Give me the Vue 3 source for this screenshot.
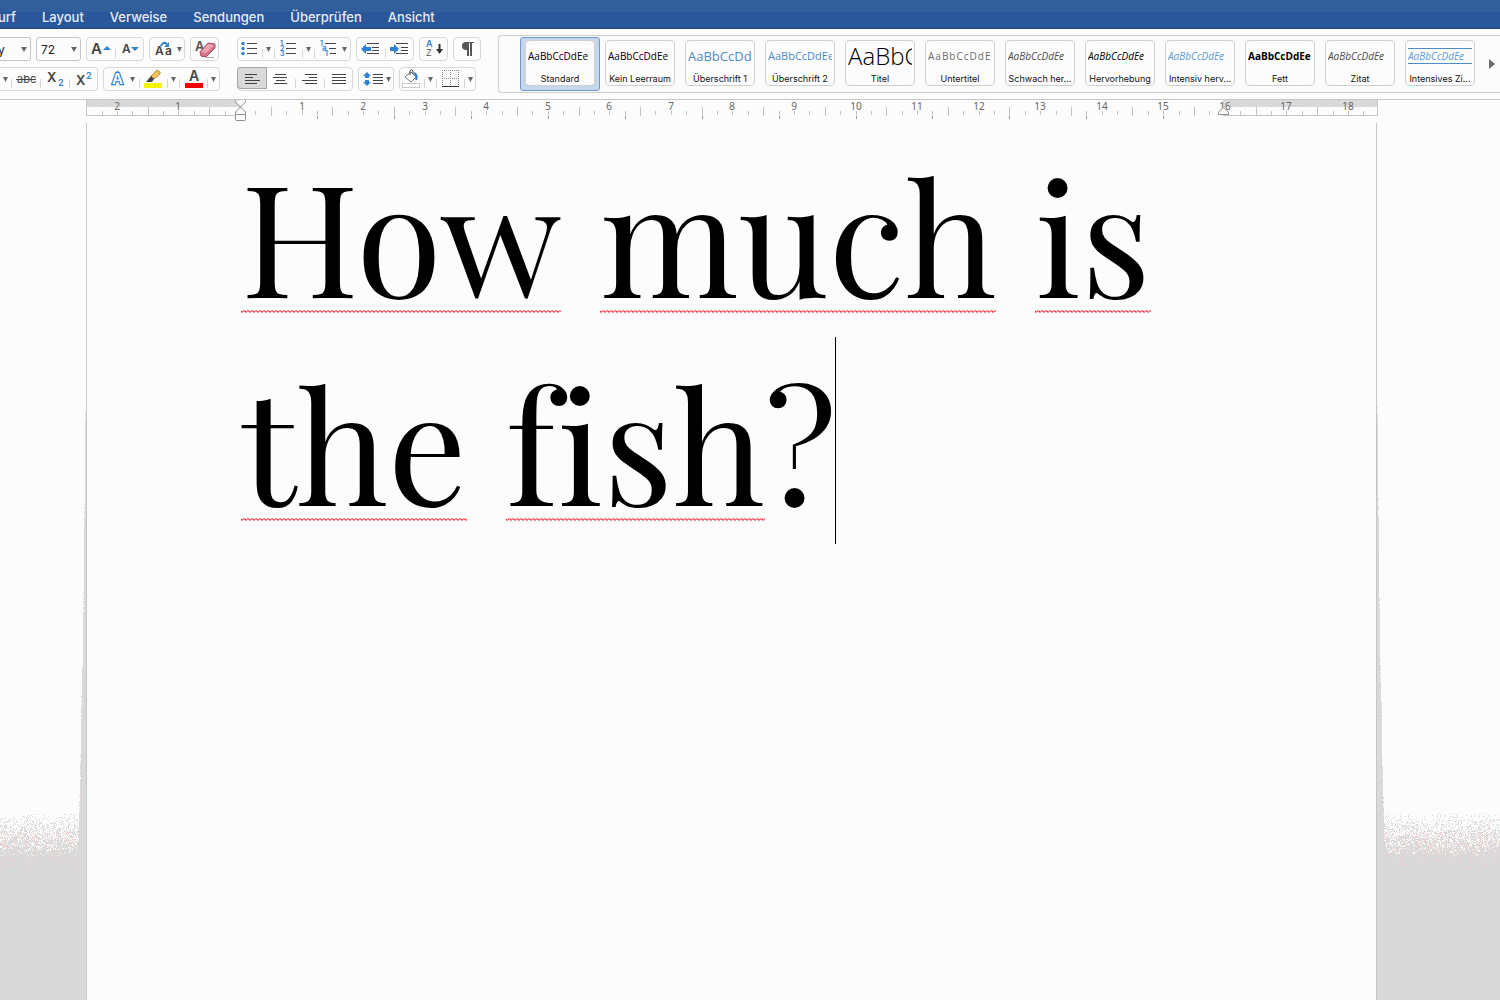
<template>
  <div class="word">
    <header class="tab-bar">
      <nav class="tabs" aria-label="Menüband">
        <a v-for="tab in tabs" :key="tab" href="#" class="tab">{{ tab }}</a>
      </nav>
    </header>

    <div class="ribbon">
      <div class="ribbon-section font-section">
        <div class="row">
          <label class="combo font-name">
            <select aria-label="Schriftart"><option>y</option></select>
          </label>
          <label class="combo font-size">
            <select aria-label="Schriftgrad"><option>72</option></select>
          </label>
          <div v-for="(group, i) in fontRow" :key="i" class="group">
            <button v-for="b in group" :key="b.label" class="tool" :aria-label="b.label">
              <svg :width="b.w" height="22" v-html="b.icon"></svg>
            </button>
          </div>
        </div>
        <div class="row">
          <div v-for="(group, i) in effectRow" :key="i" class="group" :class="{ open: i === 0 }">
            <button v-for="b in group" :key="b.label" class="tool" :aria-label="b.label">
              <svg :width="b.w" height="22" v-html="b.icon"></svg>
            </button>
          </div>
        </div>
      </div>

      <div class="ribbon-section">
        <div class="row">
          <div v-for="(group, i) in listRow" :key="i" class="group">
            <button v-for="b in group" :key="b.label" class="tool" :aria-label="b.label">
              <svg :width="b.w" height="22" v-html="b.icon"></svg>
            </button>
          </div>
        </div>
        <div class="row">
          <div v-for="(group, i) in alignRow" :key="i" class="group">
            <button
              v-for="b in group"
              :key="b.label"
              class="tool"
              :class="{ active: b.label === align }"
              :aria-label="b.label"
              @click="setAlign(b.label)"
            >
              <svg :width="b.w" height="22" v-html="b.icon"></svg>
            </button>
          </div>
        </div>
      </div>

      <div class="gallery">
        <button
          v-for="s in styles"
          :key="s.name"
          class="style-item"
          :class="{ selected: s.name === current }"
          @click="current = s.name"
        >
          <span class="card">
            <span class="sample" :class="s.kind">AaBbCcDdEe</span>
            <span class="style-name">{{ s.name }}</span>
          </span>
        </button>
        <button class="gallery-next" aria-label="Weitere Formatvorlagen">
          <svg width="6" height="10"><path d="M0 0L6 5L0 10z" fill="#6b6b6b" /></svg>
        </button>
      </div>
    </div>

    <div class="ruler">
      <svg class="ruler-scale" height="22">
        <rect x="0" y="0" width="154" height="7" fill="#d9d9d9" />
        <rect x="1137" y="0" width="155" height="7" fill="#d9d9d9" />
        <path d="M0.5 0V15.5H154M1137 15.5H1291.5V0" fill="none" stroke="#c6c6c6" />
        <rect
          v-for="t in ticks"
          :key="'t' + t.x"
          :x="t.x"
          :y="t.y"
          width="1"
          :height="t.h"
          fill="#c2c2c2"
        />
        <rect v-for="x in tabStops" :key="'s' + x" :x="x" y="16" width="1" height="3" fill="#999" />
        <text v-for="n in numbers" :key="n.x" :x="n.x" y="10" class="ruler-number">{{ n.label }}</text>
        <g fill="#fcfcfc" stroke="#8c8c8c">
          <path d="M149.500 0.500V2L154.500 7L159.500 2V0.500" />
          <path d="M149.500 14.500V12L154.500 7L159.500 12V14.500z" />
          <rect x="149.500" y="14.500" width="10" height="6" rx="1" />
          <path d="M1132.500 14.500V12.500L1137.500 7L1142.500 12.500V14.500z" />
        </g>
      </svg>
    </div>

    <main ref="workspace" class="workspace">
      <canvas ref="shade" class="shade"></canvas>
      <article class="page" contenteditable="true" spellcheck="false" role="textbox" aria-label="Dokument">
        <p class="line"><span class="word-check">How</span> <span class="word-check">much</span> <span class="word-check">is</span></p>
        <p class="line"><span class="word-check">the</span> <span class="word-check">fish</span><span class="tail">?</span></p>
      </article>
    </main>
  </div>
</template>

<script setup>
import { ref, onMounted, onUnmounted } from 'vue'

const tabs = ['urf', 'Layout', 'Verweise', 'Sendungen', 'Überprüfen', 'Ansicht']

const current = ref('Standard')
const align = ref('Linksbündig')
const alignments = ['Linksbündig', 'Zentriert', 'Rechtsbündig', 'Blocksatz']

const setAlign = (label) => {
  if (alignments.includes(label)) align.value = label
}

const styles = [
  { name: 'Standard', kind: 'normal' },
  { name: 'Kein Leerraum', kind: 'normal' },
  { name: 'Überschrift 1', kind: 'heading1' },
  { name: 'Überschrift 2', kind: 'heading2' },
  { name: 'Titel', kind: 'title' },
  { name: 'Untertitel', kind: 'subtitle' },
  { name: 'Schwach her...', kind: 'subtle' },
  { name: 'Hervorhebung', kind: 'emphasis' },
  { name: 'Intensiv herv...', kind: 'intense' },
  { name: 'Fett', kind: 'strong' },
  { name: 'Zitat', kind: 'subtle' },
  { name: 'Intensives Zi...', kind: 'quote' }
]

// icon helpers
const text = (x, y, size, str, fill = '#444', extra = '') =>
  `<text x="${x}" y="${y}" font-family="Inter, sans-serif" font-size="${size}" fill="${fill}" ${extra}>${str}</text>`
const bold = 'font-weight="600"'
const drop = (x) => `<path d="M${x} 9h5l-2.500 5z" fill="#666"/>`
const sep = '<path d="M0.500 11v9" stroke="#d6d6d6"/>'
const lines = (list) =>
  `<path d="${list.map(([x, y, w]) => `M${x} ${y}.500h${w}`).join('')}" stroke="#444" stroke-width="1"/>`
const blue = '#2f82cf'

const fontRow = [
  [
    { label: 'Schrift vergrößern', w: 28, icon: text(4, 16, 15, 'A', '#444', bold) + `<path d="M16 12h8l-4-4z" fill="${blue}"/>` },
    { label: 'Schrift verkleinern', w: 28, icon: sep + text(7, 15, 12, 'A', '#444', bold) + `<path d="M16 9h8l-4 4z" fill="${blue}"/>` }
  ],
  [
    {
      label: 'Groß-/Kleinschreibung',
      w: 34,
      icon:
        text(5, 17, 12, 'A', '#444', bold) + text(15, 17, 12, 'a', '#444', bold) +
        `<path d="M11 8q2-5 6-2" fill="none" stroke="${blue}" stroke-width="2"/><path d="M19 4v5h-5z" fill="${blue}"/>` + drop(27)
    }
  ],
  [
    {
      label: 'Formatierung löschen',
      w: 27,
      icon:
        text(4, 13, 13, 'A', '#555', bold) +
        '<path d="M15 19.500h8" stroke="#aaa"/><path d="M9 14L17 5L24 6V10L15 19L10 18z" fill="#d6788c" stroke="#a84a60"/><path d="M10 14L17 6L23 7L15 15z" fill="#e9a3b1"/>'
    }
  ]
]

const effectRow = [
  [
    { label: 'Unterstreichungsart', w: 11, icon: drop(3) },
    { label: 'Durchgestrichen', w: 29, icon: sep + text(6, 15, 11, 'abc', '#444') + '<path d="M5 11.500h20" stroke="#444"/>' },
    { label: 'Tiefgestellt', w: 29, icon: sep + text(7, 14, 13, 'X', '#444', bold) + text(18, 18, 9, '2', blue, bold) },
    { label: 'Hochgestellt', w: 28, icon: sep + text(7, 17, 13, 'X', '#444', bold) + text(17, 11, 9, '2', blue, bold) }
  ],
  [
    {
      label: 'Texteffekte',
      w: 35,
      icon: text(8, 16, 15, 'A', '#fff', `font-weight="600" stroke="${blue}" stroke-width="2.500" paint-order="stroke"`) + drop(26)
    },
    {
      label: 'Texthervorhebungsfarbe',
      w: 28,
      icon:
        sep +
        '<rect x="5" y="15" width="18" height="5" fill="#f5f500"/><path d="M12 8L18 2L21 4V6L15 11z" fill="#f4c257" stroke="#c08b2c"/><path d="M12 8L15 11L13 14H7z" fill="#444"/>'
    },
    { label: 'Hervorhebungsfarben', w: 12, icon: sep + drop(4) },
    { label: 'Schriftfarbe', w: 28, icon: sep + text(10, 13, 14, 'A', '#444', bold) + '<rect x="6" y="15" width="18" height="5" fill="#f00000"/>' },
    { label: 'Schriftfarben', w: 12, icon: sep + drop(4) }
  ]
]

const threeLines = (x, w) => lines([[x, 5, w], [x, 10, w], [x, 15, w]])

const listRow = [
  [
    {
      label: 'Aufzählung',
      w: 24,
      icon: `<g fill="${blue}"><circle cx="5" cy="5.500" r="1.700"/><circle cx="5" cy="10.500" r="1.700"/><circle cx="5" cy="15.500" r="1.700"/></g>` + threeLines(9, 10)
    },
    { label: 'Aufzählungszeichen', w: 12, icon: sep + drop(4) },
    {
      label: 'Nummerierung',
      w: 28,
      icon: sep + text(6, 8, 7, '1', blue, bold) + text(6, 13, 7, '2', blue, bold) + text(6, 18, 7, '3', blue, bold) + threeLines(12, 10)
    },
    { label: 'Nummerierungsformate', w: 12, icon: sep + drop(4) },
    {
      label: 'Liste mit mehreren Ebenen',
      w: 36,
      icon:
        sep + text(6, 8, 7, '1', blue, bold) + text(8, 13, 8, 'a', blue, bold) + text(11, 18, 7, '1', blue, bold) +
        lines([[11, 5, 11], [15, 10, 7], [16, 15, 6]]) + drop(28)
    }
  ],
  [
    {
      label: 'Einzug verkleinern',
      w: 28,
      icon: `<path d="M4 11l5-5v3h5v4H9v3z" fill="${blue}"/>` + lines([[10, 5, 12], [15, 9, 7], [15, 12, 7], [10, 15, 12]])
    },
    {
      label: 'Einzug vergrößern',
      w: 28,
      icon: sep + `<path d="M14 11l-5-5v3H5v4h4v3z" fill="${blue}"/>` + lines([[11, 5, 12], [16, 9, 7], [16, 12, 7], [11, 15, 12]])
    }
  ],
  [
    {
      label: 'Sortieren',
      w: 27,
      icon:
        text(6, 9, 9, 'A', blue, bold) + text(6, 18, 9, 'Z', '#555') +
        '<path d="M19.500 6v7" stroke="#333" stroke-width="2"/><path d="M16 11h7l-3.500 5z" fill="#333"/>'
    }
  ],
  [
    {
      label: 'Formatierungszeichen',
      w: 26,
      icon: '<path d="M15 4H12a4 4 0 0 0 0 8h3z" fill="#555"/><path d="M14 4v14M17 4v14" stroke="#555" stroke-width="2"/><path d="M11 4.500h9" stroke="#555"/>'
    }
  ]
]

const alignRow = [
  [
    { label: 'Linksbündig', w: 28, icon: lines([[7, 6, 12], [7, 9, 8], [7, 12, 15], [7, 15, 12]]) },
    { label: 'Zentriert', w: 29, icon: lines([[9, 6, 11], [7, 9, 14], [10, 12, 9], [8, 15, 13]]) },
    { label: 'Rechtsbündig', w: 29, icon: sep + lines([[10, 6, 12], [14, 9, 8], [7, 12, 15], [10, 15, 12]]) },
    { label: 'Blocksatz', w: 28, icon: sep + lines([[8, 6, 14], [8, 9, 14], [8, 12, 14], [8, 15, 14]]) }
  ],
  [
    {
      label: 'Zeilenabstand',
      w: 34,
      icon:
        `<path d="M8 4l4 4h-2v2h-4v-2h-2zM8 18l4-4h-2v-2h-4v2h-2z" fill="${blue}"/>` +
        lines([[14, 6, 10], [14, 9, 10], [14, 12, 10], [14, 15, 10]]) + drop(27)
    }
  ],
  [
    {
      label: 'Schattierung',
      w: 24,
      icon:
        '<path d="M5 9L11 4L16 9L11 14z" fill="#fff" stroke="#777"/><path d="M10 7V3q1.500-3 3 0v3" fill="none" stroke="#444"/><path d="M14 5q4 2 2 7" fill="none" stroke="#2f82cf" stroke-width="2"/><rect x="2.500" y="15.500" width="17" height="4" fill="#fff" stroke="#c9c9c9"/>'
    },
    { label: 'Schattierungsfarben', w: 12, icon: sep + drop(4) },
    {
      label: 'Rahmen',
      w: 28,
      icon: sep + '<path d="M6.500 2v16M14.500 2v16M22.500 2v16M6 2.500h17M6 10.500h17" stroke="#888" stroke-dasharray="1 1"/><path d="M6 18.500h17" stroke="#333"/>'
    },
    { label: 'Rahmenarten', w: 11, icon: sep + drop(4) }
  ]
]

// ruler: 0 cm sits where the text column starts
const CM = 61.55
const ORIGIN = 154
const ticks = []
const numbers = []
for (let q = -10; q <= 73; q++) {
  const x = Math.round(ORIGIN + (q * CM) / 4)
  if (q === 0 || q === 64 || x < 3) continue
  const half = q % 4 === 2 || q % 4 === -2
  ticks.push({ x, y: half ? 7 : 11, h: half ? 9 : 4 })
}
for (let n = -2; n <= 18; n++) {
  if (n !== 0) numbers.push({ x: Math.round(ORIGIN + n * CM), label: Math.abs(n) })
}
const tabStops = Array.from({ length: 12 }, (_, i) => Math.round(ORIGIN + (i + 1) * CM * 1.25))

// shaded surface around the page, dithered towards the top
const workspace = ref(null)
const shade = ref(null)
let observer = null

const GRAY = '#d9d9d9'
const EDGE_STEPS = [276, 374, 465, 532, 570, 628, 665, 692]
const BAND_TOP = 690
const BAND_END = 752

const drawShade = () => {
  const w = workspace.value.clientWidth
  const h = workspace.value.clientHeight
  const canvas = shade.value
  canvas.width = w
  canvas.height = h
  const ctx = canvas.getContext('2d')
  const left = 86
  const right = w - 123
  let seed = 7
  const rand = () => {
    seed = (seed * 16807) % 2147483647
    return seed / 2147483647
  }
  const dot = (x, y, color) => {
    ctx.fillStyle = color
    ctx.fillRect(x, y, 1, 1)
  }

  EDGE_STEPS.forEach((start, i) => {
    for (let y = start; y < h; y++) {
      const p = (y - start) / 28
      if (rand() < p) dot(left - 1 - i, y, p < 2 && rand() < 0.1 ? '#f3cfcf' : GRAY)
      if (rand() < p) dot(right + i, y, p < 2 && rand() < 0.1 ? '#f3cfcf' : GRAY)
    }
  })

  for (let y = BAND_TOP; y < BAND_END; y++) {
    const t = (y - BAND_TOP) / (BAND_END - BAND_TOP)
    const cover = Math.min(1, t * 1.4 + 0.03)
    const pink = t < 0.3 ? 0.04 : 0.3 * (1 - t)
    for (let x = 0; x < w; x++) {
      if (x >= left - 8 && x < right + 8) continue
      if (rand() > cover) continue
      const r = rand()
      dot(x, y, r < pink ? '#f5cdcd' : r > 0.95 && t < 0.7 ? '#e9e6cf' : r > 0.7 && t < 0.6 ? '#dadee0' : GRAY)
    }
  }
  ctx.fillStyle = GRAY
  ctx.fillRect(0, BAND_END, left, h)
  ctx.fillRect(right, BAND_END, w, h)
}

onMounted(() => {
  drawShade()
  observer = new ResizeObserver(drawShade)
  observer.observe(workspace.value)
})

onUnmounted(() => {
  observer.disconnect()
})
</script>

<style>
body {
  background: #fcfcfc;
}
</style>

<style scoped>
.word {
  display: flex;
  flex-direction: column;
  min-height: 100vh;
  overflow: hidden;
  font-family: Inter, sans-serif;
  background: #fcfcfc;
}

button {
  padding: 0;
  border: none;
  background: none;
  font: inherit;
}

/* blue bar with the ribbon tabs */
.tab-bar {
  height: 29px;
  box-sizing: border-box;
  border-bottom: 1px solid #1f4788;
  background: linear-gradient(#305f9c 12px, #2a579a 12px);
}

.tabs {
  display: flex;
  gap: 26px;
  padding-top: 7px;
}

.tab {
  color: #e6ecf5;
  font-size: 13px;
  font-weight: 500;
  line-height: 20px;
  text-decoration: none;
}

.tab:first-child {
  display: flex;
  justify-content: flex-end;
  width: 16px;
  overflow: hidden;
}

/* ribbon */
.ribbon {
  display: flex;
  border-bottom: 1px solid #c6c6c6;
  height: 70px;
}

.ribbon-section {
  display: flex;
  flex-direction: column;
  gap: 6px;
  padding-top: 8px;
  margin-right: 17px;
}

.row {
  display: flex;
  gap: 5px;
}

.group {
  display: flex;
  height: 22px;
  border: 1px solid #d9d9d9;
  border-radius: 4px;
}

.group.open {
  border-left: none;
  border-radius: 0 4px 4px 0;
}

.tool {
  display: flex;
  height: 22px;
}

.tool.active {
  margin: -1px 0 -1px -1px;
  border: 1px solid #a3a3a3;
  border-right-width: 0;
  border-radius: 4px 0 0 4px;
  background: #d9d9d9;
  box-shadow: 1px 0 #a3a3a3;
}

.combo {
  position: relative;
  height: 22px;
  border: 1px solid #c6c6c6;
  border-radius: 3px;
}

.combo::after {
  content: '';
  position: absolute;
  top: 9px;
  right: 3px;
  border: 3px solid transparent;
  border-top: 5px solid #666;
  border-bottom: none;
  pointer-events: none;
}

.combo select {
  width: 100%;
  height: 22px;
  padding: 0 0 0 4px;
  border: none;
  background: none;
  appearance: none;
  color: #222;
  font: 12px Inter, sans-serif;
}

.font-name {
  width: 30px;
  border-left: none;
  border-radius: 0 3px 3px 0;
}

.font-name select {
  padding: 0;
  text-indent: -2px;
}

.font-size {
  width: 43px;
}

/* style gallery */
.gallery {
  display: flex;
  flex: 1;
  min-width: 0;
  height: 56px;
  margin-top: 6px;
  padding-left: 21px;
  border: 1px solid #cfcfcf;
  border-right: none;
  border-radius: 4px 0 0 4px;
  overflow: hidden;
}

.style-item {
  flex: none;
  width: 80px;
  height: 54px;
  margin-top: 1px;
  padding: 2px 4px 4px;
  border: 1px solid transparent;
  border-radius: 3px;
  box-sizing: border-box;
}

.style-item.selected {
  border-color: #7199cd;
  background: #c6d6ea;
}

.card {
  display: flex;
  flex-direction: column;
  justify-content: space-between;
  height: 46px;
  padding: 0 2px;
  border: 1px solid #d0d0d0;
  border-radius: 4px;
  box-sizing: border-box;
  background: #fcfcfc;
}

.sample {
  height: 30px;
  overflow: hidden;
  color: #000;
  font-family: 'Open Sans', 'Noto Sans', sans-serif;
  font-size: 10px;
  line-height: 30px;
  text-align: left;
  white-space: nowrap;
}

.style-name {
  color: #111;
  font-size: 9px;
  line-height: 12px;
  text-align: center;
  white-space: nowrap;
}

.sample.heading1 {
  color: #4a8bc9;
  font-size: 13px;
}

.sample.heading2 {
  color: #4a8bc9;
  font-size: 11px;
}

.sample.title {
  font-size: 24px;
  font-weight: 300;
}

.sample.subtitle {
  color: #6b6b6b;
  letter-spacing: 1px;
}

.sample.subtle {
  color: #4a4a4a;
  font-style: italic;
}

.sample.emphasis {
  font-style: italic;
}

.sample.intense {
  color: #5b9bd5;
  font-style: italic;
}

.sample.strong {
  font-weight: 700;
}

.sample.quote {
  height: 14px;
  margin-top: 7px;
  border-top: 1px solid #4a8bc9;
  border-bottom: 1px solid #4a8bc9;
  color: #5b9bd5;
  font-style: italic;
  line-height: 14px;
}

.gallery-next {
  display: flex;
  align-items: center;
  margin-left: auto;
  padding-right: 5px;
}

/* ruler */
.ruler {
  height: 23px;
  padding-left: 86px;
}

.ruler-scale {
  display: block;
  width: 100%;
}

.ruler-number {
  fill: #666;
  font-family: 'Noto Sans', sans-serif;
  font-size: 10px;
  text-anchor: middle;
}

/* document */
.workspace {
  position: relative;
  display: flex;
  flex: 1;
  padding: 0 123px 0 86px;
}

.shade {
  position: absolute;
  top: 0;
  left: 0;
}

.page {
  position: relative;
  flex: 1;
  min-width: 0;
  padding: 6px 0 0 154px;
  border: solid #c6c6c6;
  border-width: 0 1px;
  outline: none;
  background: #fcfcfc;
  color: #000;
  font-family: 'Playfair Display', 'Liberation Serif', serif;
  font-size: 156px;
  font-variant-ligatures: no-common-ligatures;
  line-height: 208px;
}

.line {
  margin: 0;
  white-space: nowrap;
}

.word-check {
  position: relative;
}

/* spelling squiggle */
.word-check::after {
  content: '';
  position: absolute;
  left: 0;
  right: 0;
  bottom: 24px;
  height: 3px;
  background: url("data:image/svg+xml,%3Csvg xmlns='http://www.w3.org/2000/svg' width='4' height='3'%3E%3Cpath d='M-1 -.5L1 2.500L3 .5L5 2.500' fill='none' stroke='%23f00010'/%3E%3C/svg%3E") repeat-x;
}

.tail {
  position: relative;
}

/* text cursor */
.tail::after {
  content: '';
  position: absolute;
  top: 0;
  right: 0;
  width: 1px;
  height: 207px;
  background: #000;
}
</style>
